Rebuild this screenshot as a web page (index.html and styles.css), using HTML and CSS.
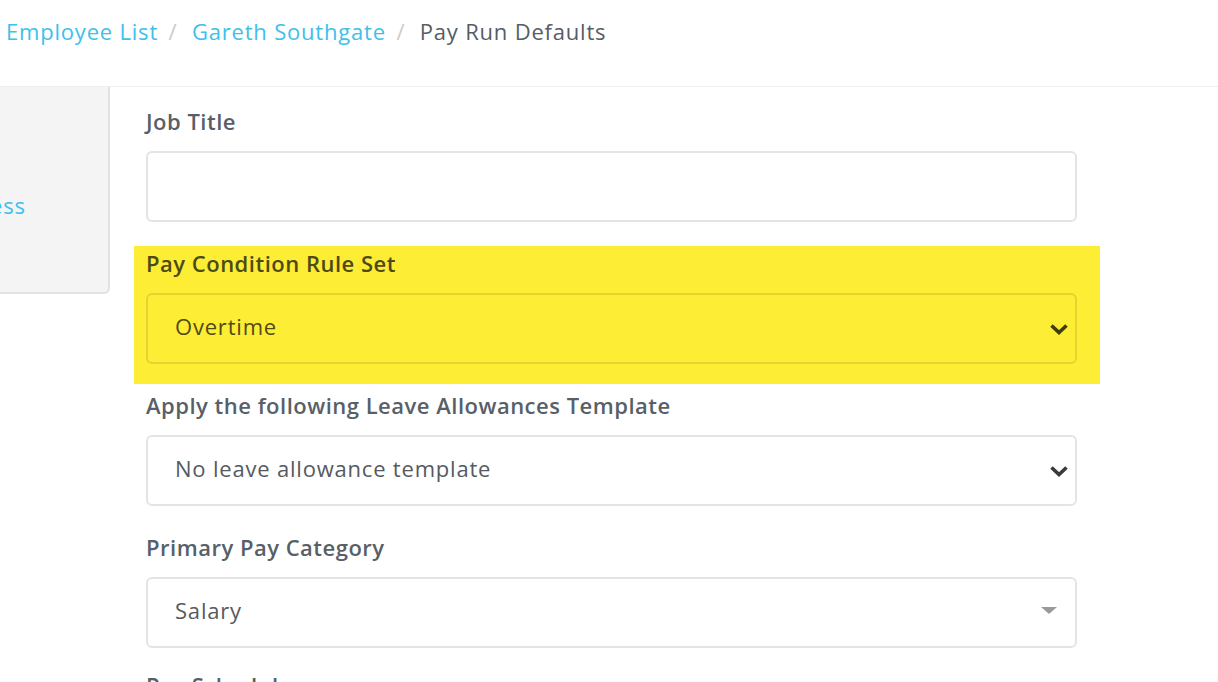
FILE: index.html
```html
<!DOCTYPE html>
<html>
<head>
<meta charset="utf-8">
<link rel="stylesheet" href="styles.css">
</head>
<body>
<header class="topbar">
  <nav class="crumbs">
    <a class="crumb-link">Employee List</a>
    <span class="sep">/</span>
    <a class="crumb-link">Gareth Southgate</a>
    <span class="sep">/</span>
    <span class="crumb-current">Pay Run Defaults</span>
  </nav>
</header>
<div class="layout">
  <aside class="sidebar">
    <a class="side-link">Address</a>
  </aside>
  <main class="form">
    <div class="group">
      <label class="label">Job Title</label>
      <div class="field"></div>
    </div>
    <div class="group highlight">
      <label class="label">Pay Condition Rule Set</label>
      <div class="field select">
        <span class="value">Overtime</span>
        <svg class="chev" width="20" height="12" viewBox="0 0 20 12"><path d="M2.5 2.5 L10 9.5 L17.5 2.5" fill="none" stroke="currentColor" stroke-width="3.6"/></svg>
      </div>
    </div>
    <div class="group">
      <label class="label">Apply the following Leave Allowances Template</label>
      <div class="field select">
        <span class="value">No leave allowance template</span>
        <svg class="chev" width="20" height="12" viewBox="0 0 20 12"><path d="M2.5 2.5 L10 9.5 L17.5 2.5" fill="none" stroke="currentColor" stroke-width="3.6"/></svg>
      </div>
    </div>
    <div class="group">
      <label class="label">Primary Pay Category</label>
      <div class="field select">
        <span class="value">Salary</span>
        <span class="caret"></span>
      </div>
    </div>
    <div class="group last">
      <label class="label">Pay Schedule</label>
    </div>
  </main>
</div>
</body>
</html>
```

FILE: styles.css
```css
* { box-sizing: border-box; }
html, body { margin: 0; padding: 0; background: #fff; overflow: hidden; }
body {
  font-family: "Open Sans", Lato, sans-serif;
  font-size: 22px;
  color: #555d66;
  width: 1218px;
  height: 682px;
}
.topbar {
  height: 87px;
  border-bottom: 1px solid #eeeeee;
  padding-top: 15px;
}
.crumbs {
  padding-left: 6px;
  line-height: 32px;
  white-space: nowrap;
  letter-spacing: 0.8px;
}
.crumb-link { color: #3ec0ec; }
.sep { color: #cccccc; margin: 0 8px 0 4px; }
.crumb-current { color: #555d66; }
.layout { display: flex; align-items: flex-start; }
.sidebar {
  flex: none;
  width: 200px;
  margin-left: -90px;
  height: 207px;
  background: #f4f4f4;
  border-right: 2px solid #e2e2e2;
  border-bottom: 2px solid #e2e2e2;
  border-bottom-right-radius: 6px;
  padding: 105px 0 0 27px;
  line-height: 26px;
  letter-spacing: 0.8px;
}
.side-link { color: #3ec0ec; }
.form {
  flex: none;
  width: 931px;
  margin-left: 36px;
  padding-top: 20px;
}
.group { margin-bottom: 27px; }
.group.last { margin-top: -4px; }
.label {
  display: block;
  line-height: 28px;
  font-weight: 600;
  color: #585f68;
  margin-bottom: 16px;
  white-space: nowrap;
  letter-spacing: 0.5px;
}
.field {
  height: 71px;
  border: 2px solid #e1e5e8;
  border-radius: 6px;
  background: #fff;
}
.select {
  display: flex;
  align-items: center;
  justify-content: space-between;
  padding: 0 6px 6px 27px;
}
.value { color: #555a60; letter-spacing: 0.8px; }
.chev { color: #3a3a3a; margin-top: 6px; }
.caret {
  width: 0; height: 0;
  border-left: 8px solid transparent;
  border-right: 8px solid transparent;
  border-top: 7px solid #9a9a9a;
  margin-right: 12px;
  margin-top: 2px;
}
.highlight {
  background: #fded34;
  margin: -3px -23px 7px -12px;
  padding: 3px 23px 20px 12px;
}
.highlight .label { color: #4d4a18; }
.highlight .field { background: #fded34; border-color: #e3d531; }
.highlight .value { color: #4f4b17; }
.highlight .chev { color: #3f3c0e; }
```
